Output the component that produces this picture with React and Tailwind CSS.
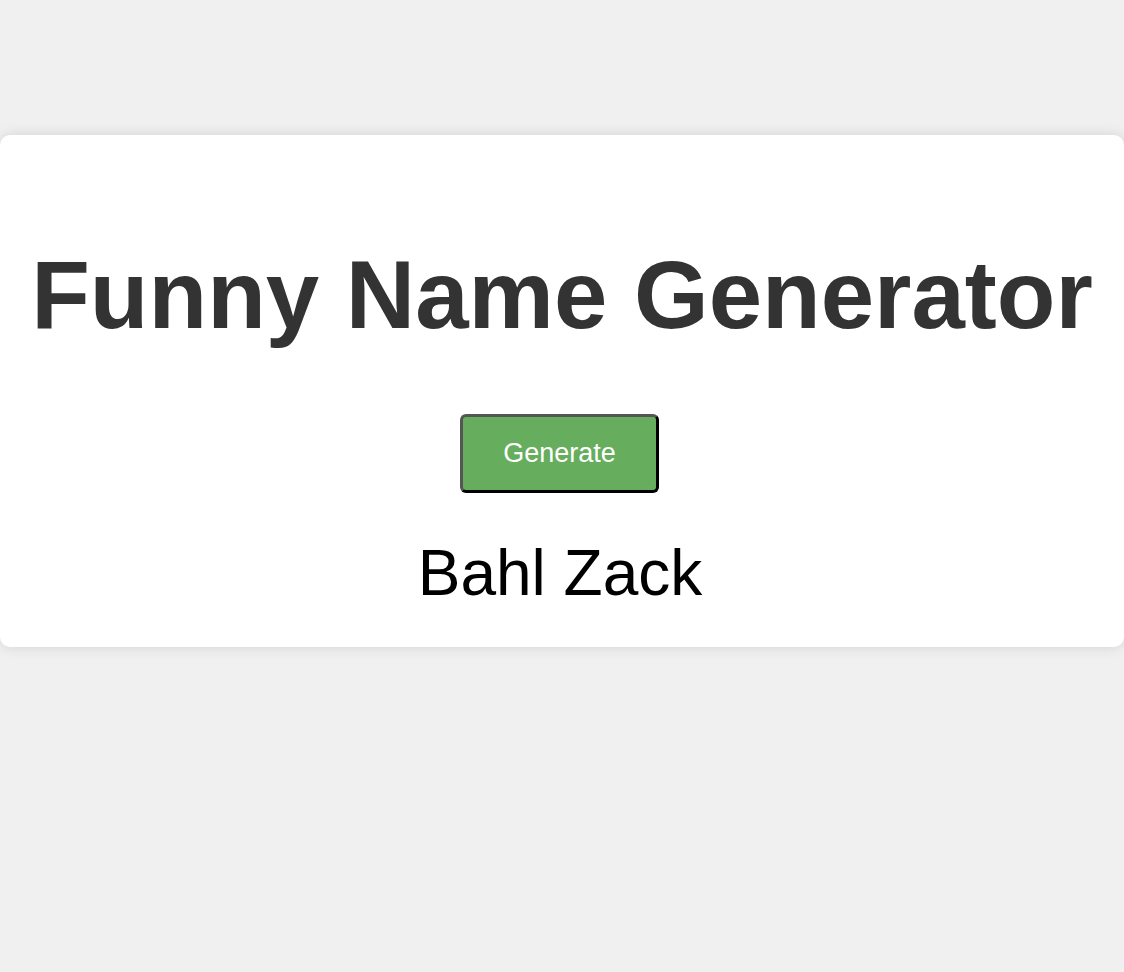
export default function App() {
  return (
    <div className="min-h-[972px] w-full bg-[#f0f0f0] pt-[135px]" style={{ fontFamily: '"Liberation Sans", Arial, sans-serif' }}>
      <div className="flex h-[512px] w-full flex-col items-center rounded-[10px] bg-white pt-[105px] shadow-[0_0_14px_rgba(0,0,0,0.12)]">
        <h1 className="m-0 whitespace-nowrap text-[96px] font-bold leading-[110px] text-[#333333]">
          Funny Name Generator
        </h1>
        <button
          type="button"
          className="mr-[5px] mt-[64px] flex h-[79px] w-[199px] items-center justify-center rounded-[6px] border-[3px] border-t-[#555555] border-l-[#555555] border-b-black border-r-black bg-[#66ad5d] text-[27px] text-white"
        >
          Generate
        </button>
        <div className="mr-[4px] mt-[43px] text-[64px] leading-[74px] text-black">Bahl Zack</div>
      </div>
    </div>
  );
}
